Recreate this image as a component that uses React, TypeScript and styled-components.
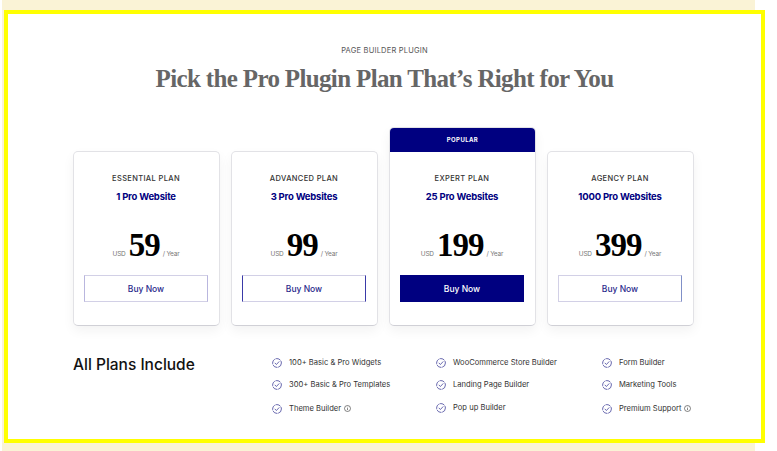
import styled, { createGlobalStyle } from 'styled-components';

const GlobalStyle = createGlobalStyle`
  html, body {
    margin: 0;
    padding: 0;
    background: #fff;
    height: 451px;
    overflow: hidden;
  }
  * {
    box-sizing: border-box;
  }
`;

const Backdrop = styled.div`
  width: 753px;
  height: 451px;
  margin-left: 2px;
  padding-top: 10px;
  background: #faf3d6;
`;

const Frame = styled.main`
  width: 761px;
  height: 433px;
  margin-left: 2px;
  padding-top: 31px;
  background: #fff;
  border: 4px solid #ffff00;
  font-family: Inter, 'Liberation Sans', sans-serif;
`;

const Eyebrow = styled.div`
  font-size: 7.5px;
  line-height: 12px;
  text-align: center;
  color: #555;
  letter-spacing: 0.2px;
`;

const Heading = styled.h1`
  margin: 5px 0 0;
  font-family: 'Liberation Serif', serif;
  font-size: 25px;
  line-height: 34px;
  font-weight: 700;
  letter-spacing: -0.65px;
  text-align: center;
  color: #666;
`;

const Plans = styled.section`
  display: grid;
  grid-template-columns: repeat(4, 147px);
  gap: 11px;
  align-items: end;
  margin: 31px 0 0 65px;
`;

const Card = styled.article<{ $popular?: boolean }>`
  height: ${(p) => (p.$popular ? 199 : 175)}px;
  background: #fff;
  border: 1px solid #e2e2e6;
  border-bottom-color: #d0d0d6;
  border-radius: 5px;
  box-shadow: 0 5px 12px rgba(0, 0, 0, 0.05);
  overflow: hidden;
  text-align: center;
`;

const Banner = styled.div`
  height: 24px;
  background: #000080;
  color: #fff;
  font-size: 6px;
  line-height: 24px;
  font-weight: 700;
  letter-spacing: 0.4px;
`;

const CardBody = styled.div`
  display: flex;
  flex-direction: column;
  align-items: center;
  padding: 22px 11px 0 10px;
`;

const PlanName = styled.div`
  font-size: 7.5px;
  line-height: 10px;
  font-weight: 500;
  letter-spacing: 0.35px;
  color: #333;
`;

const Sites = styled.div`
  margin-top: 7px;
  font-size: 9.5px;
  line-height: 12px;
  font-weight: 700;
  letter-spacing: -0.2px;
  color: #000080;
`;

const PriceRow = styled.div`
  display: flex;
  align-items: baseline;
  justify-content: center;
  gap: 3px;
  height: 40px;
  margin-top: 22px;
`;

const Unit = styled.span`
  font-size: 6.5px;
  color: #777;
  letter-spacing: -0.2px;
`;

const Amount = styled.span`
  font-family: 'Liberation Serif', serif;
  font-size: 33px;
  line-height: 40px;
  font-weight: 700;
  letter-spacing: -1px;
  color: #000;
`;

const BuyButton = styled.button<{ $filled?: boolean; $left?: string; $right?: string }>`
  width: 124px;
  height: 27px;
  margin-top: 10px;
  padding: 0;
  font-family: inherit;
  font-size: 8.5px;
  font-weight: 500;
  color: ${(p) => (p.$filled ? '#fff' : '#2a2a8c')};
  background: ${(p) => (p.$filled ? '#000080' : '#fff')};
  border-style: solid;
  border-width: 1px;
  border-color: ${(p) => (p.$filled ? '#000080' : '#d2d0e6')};
  border-left-color: ${(p) => p.$left ?? (p.$filled ? '#000080' : '#d2d0e6')};
  border-right-color: ${(p) => p.$right ?? (p.$filled ? '#000080' : '#d2d0e6')};
`;

const Includes = styled.section`
  display: grid;
  grid-template-columns: 199px 164px 166px 1fr;
  margin: 31px 0 0 65px;
`;

const IncludesTitle = styled.h2`
  margin: -2px 0 0;
  font-size: 15.5px;
  line-height: 20px;
  font-weight: 500;
  color: #111;
`;

const FeatureColumn = styled.ul`
  display: flex;
  flex-direction: column;
  gap: 11px;
  margin: 0;
  padding: 0;
  list-style: none;
`;

const Feature = styled.li<{ $offset?: number }>`
  display: flex;
  align-items: center;
  gap: 7px;
  height: 11px;
  margin-top: ${(p) => p.$offset ?? 0}px;
  font-size: 7.6px;
  color: #333;
`;

const InfoMark = styled.svg`
  width: 7px;
  height: 7px;
  margin-left: -4px;
`;

const CheckIcon = () => (
  <svg width="10" height="10" viewBox="0 0 20 20" fill="none" stroke="#2a2a8c" strokeWidth="1.4">
    <circle cx="10" cy="10" r="8.8" strokeDasharray="11 1.4" />
    <path d="M6 10.2l2.8 2.8L14 7.4" strokeLinecap="round" strokeLinejoin="round" />
  </svg>
);

const InfoIcon = () => (
  <InfoMark viewBox="0 0 14 14" fill="none" stroke="#333" strokeWidth="1.2">
    <circle cx="7" cy="7" r="6" />
    <path d="M7 6.2v4M7 3.6v1.2" />
  </InfoMark>
);

const plans = [
  { name: 'ESSENTIAL PLAN', sites: '1 Pro Website', price: '59', left: '#b9b6de', right: '#b9b6de' },
  { name: 'ADVANCED PLAN', sites: '3 Pro Websites', price: '99', left: '#3a3aa8', right: '#3a3aa8' },
  { name: 'EXPERT PLAN', sites: '25 Pro Websites', price: '199', popular: true },
  { name: 'AGENCY PLAN', sites: '1000 Pro Websites', price: '399', right: '#8090c8' },
];

const columns = [
  [
    { label: '100+ Basic & Pro Widgets' },
    { label: '300+ Basic & Pro Templates' },
    { label: 'Theme Builder', info: true, offset: 2 },
  ],
  [
    { label: 'WooCommerce Store Builder' },
    { label: 'Landing Page Builder' },
    { label: 'Pop up Builder', offset: 1 },
  ],
  [
    { label: 'Form Builder' },
    { label: 'Marketing Tools' },
    { label: 'Premium Support', info: true, offset: 2 },
  ],
];

function App(): JSX.Element {
  return (
    <>
      <GlobalStyle />
      <Backdrop>
        <Frame>
          <Eyebrow>PAGE BUILDER PLUGIN</Eyebrow>
          <Heading>Pick the Pro Plugin Plan That’s Right for You</Heading>
          <Plans>
            {plans.map((plan) => (
              <Card key={plan.name} $popular={plan.popular}>
                {plan.popular && <Banner>POPULAR</Banner>}
                <CardBody>
                  <PlanName>{plan.name}</PlanName>
                  <Sites>{plan.sites}</Sites>
                  <PriceRow>
                    <Unit>USD</Unit>
                    <Amount>{plan.price}</Amount>
                    <Unit>/ Year</Unit>
                  </PriceRow>
                  <BuyButton $filled={plan.popular} $left={plan.left} $right={plan.right}>
                    Buy Now
                  </BuyButton>
                </CardBody>
              </Card>
            ))}
          </Plans>
          <Includes>
            <IncludesTitle>All Plans Include</IncludesTitle>
            {columns.map((column, i) => (
              <FeatureColumn key={i}>
                {column.map((item) => (
                  <Feature key={item.label} $offset={item.offset}>
                    <CheckIcon />
                    {item.label}
                    {item.info && <InfoIcon />}
                  </Feature>
                ))}
              </FeatureColumn>
            ))}
          </Includes>
        </Frame>
      </Backdrop>
    </>
  );
}

export default App;
